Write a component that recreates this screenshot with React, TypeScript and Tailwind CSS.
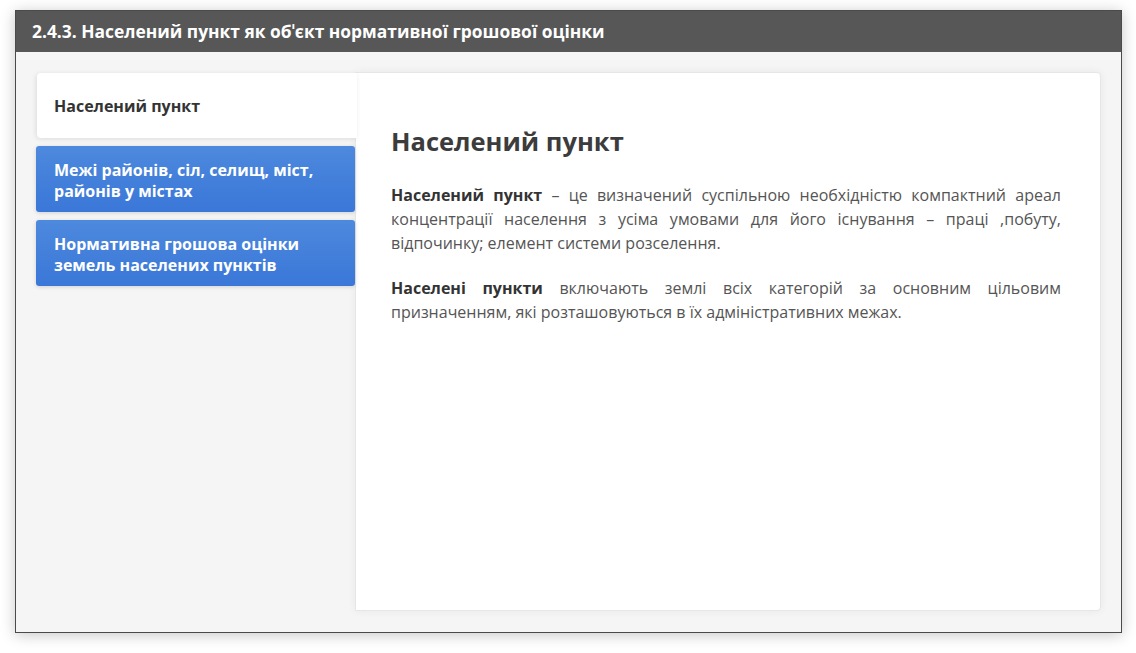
import React from "react";

export default function App() {
  const font = { fontFamily: '"Open Sans", "Noto Sans", sans-serif' };
  return (
    <div className="w-[1136px] h-[653px] bg-white pt-[10px] pl-[15px]" style={font}>
      <div className="w-[1107px] h-[623px] border border-[#4a4a4a] shadow-[0_2px_14px_rgba(0,0,0,0.22)] flex flex-col bg-[#f5f5f5]">
        <div className="h-[41px] bg-[#575757] text-white font-bold text-[17.4px] pl-[16px] flex items-center shrink-0">
          2.4.3. Населений пункт як обˈєкт нормативної грошової оцінки
        </div>
        <div className="flex-1 pt-[20px] pl-[20px] pr-[20px] pb-[21px] flex">
          <div className="w-[319px] shrink-0 flex flex-col gap-[8px] pt-[1px] relative z-10">
            <div className="h-[65px] bg-white rounded-l-[4px] shadow-[-1px_1px_5px_rgba(0,0,0,0.1)] ml-[1px] mr-[-2px] flex items-center pl-[17px] pt-[1px] text-[16px] font-bold text-[#333]">
              Населений пункт
            </div>
            <div className="h-[66px] rounded-[3px] bg-gradient-to-b from-[#4d89dd] to-[#3a77d8] shadow-[0_1px_4px_rgba(0,0,0,0.15)] flex items-center pl-[18px] pt-[4px] text-[16px] leading-[21px] font-bold text-white">
              <span>Межі районів, сіл, селищ, міст,<br />районів у містах</span>
            </div>
            <div className="h-[66px] rounded-[3px] bg-gradient-to-b from-[#4d89dd] to-[#3a77d8] shadow-[0_1px_4px_rgba(0,0,0,0.15)] flex items-center pl-[18px] pt-[4px] text-[16px] leading-[21px] font-bold text-white">
              <span>Нормативна грошова оцінки<br />земель населених пунктів</span>
            </div>
          </div>
          <div className="flex-1 bg-white rounded-r-[4px] border border-[#e6e6e6] shadow-[0_0_8px_rgba(0,0,0,0.06)] pl-[35px] pr-[39px] pt-[50px]">
            <h1 className="text-[25.5px] leading-[36px] font-bold text-[#3c3c3c] mb-[24px]">Населений пункт</h1>
            <p className="text-[16px] leading-[24px] text-[#555] text-justify mb-[21px]">
              <b className="text-[#333]">Населений пункт</b> – це визначений суспільною необхідністю компактний ареал концентрації населення з усіма умовами для його існування – праці ,побуту, відпочинку; елемент системи розселення.
            </p>
            <p className="text-[16px] leading-[24px] text-[#555] text-justify">
              <b className="text-[#333]">Населені пункти</b> включають землі всіх категорій за основним цільовим призначенням, які розташовуються в їх адміністративних межах.
            </p>
          </div>
        </div>
      </div>
    </div>
  );
}
